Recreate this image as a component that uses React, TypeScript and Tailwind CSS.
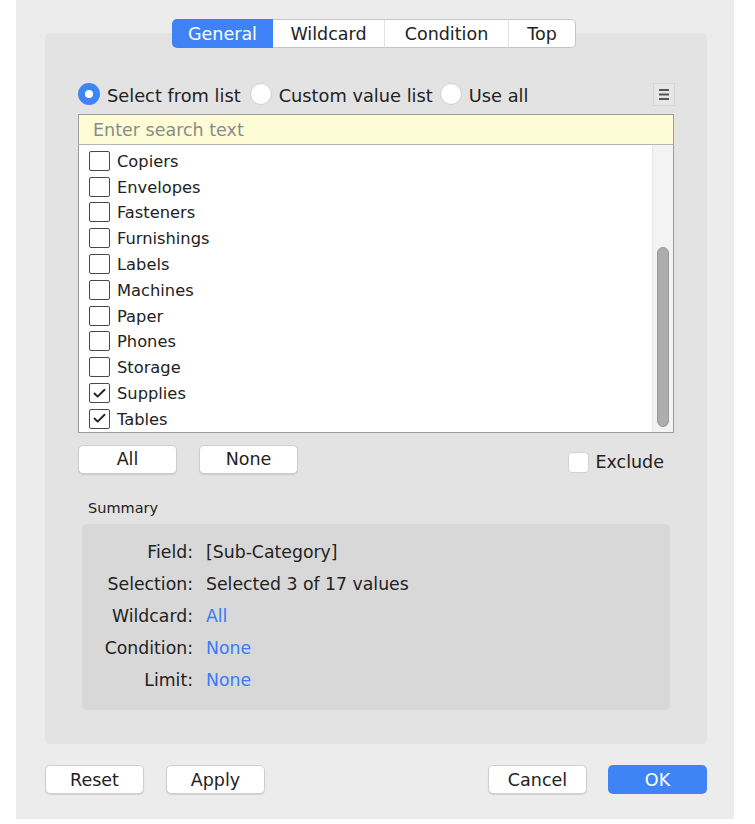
import { Check } from 'lucide-react'

const items = [
  { name: 'Copiers', checked: false },
  { name: 'Envelopes', checked: false },
  { name: 'Fasteners', checked: false },
  { name: 'Furnishings', checked: false },
  { name: 'Labels', checked: false },
  { name: 'Machines', checked: false },
  { name: 'Paper', checked: false },
  { name: 'Phones', checked: false },
  { name: 'Storage', checked: false },
  { name: 'Supplies', checked: true },
  { name: 'Tables', checked: true },
]

const summary = [
  { label: 'Field:', value: '[Sub-Category]', link: false },
  { label: 'Selection:', value: 'Selected 3 of 17 values', link: false },
  { label: 'Wildcard:', value: 'All', link: true },
  { label: 'Condition:', value: 'None', link: true },
  { label: 'Limit:', value: 'None', link: true },
]

const Radio = ({ on, label }: { on?: boolean; label: string }) => (
  <div className="flex items-center">
    {on ? (
      <div className="w-[22px] h-[22px] rounded-full bg-[#3f85f6] flex items-center justify-center">
        <div className="w-[8px] h-[8px] rounded-full bg-white" />
      </div>
    ) : (
      <div className="w-[22px] h-[22px] rounded-full bg-white border border-[#d0d0d0]" />
    )}
    <span className="ml-[7px] translate-y-[2px]">{label}</span>
  </div>
)

const Button = ({ children, className = '' }: { children: React.ReactNode; className?: string }) => (
  <button className={`h-[29px] w-[99px] rounded-[5px] bg-white border border-[#cfcfcf] shadow-[0_1px_1px_rgba(0,0,0,0.12)] text-[17.5px] text-[#222] leading-none flex items-center justify-center ${className}`}>
    <span className="translate-y-[1px]">{children}</span>
  </button>
)

export default function App() {
  return (
    <div className="w-[755px] h-[824px] bg-white font-['DejaVu_Sans',sans-serif] text-[#222]">
      <div className="ml-[16px] w-[718px] h-[819px] bg-[#ececec] pl-[29px] pr-[27px] pt-[33px]">
        {/* Panel */}
        <div className="w-full h-[711px] bg-[#e3e3e3] rounded-[5px] px-[33px] flex flex-col">
          {/* Tabs */}
          <div className="-mt-[14px] h-[29px] flex justify-center pr-[4px] text-[17.5px] leading-none">
            <div className="w-[101px] h-full bg-[#3f82f6] text-white rounded-l-[5px] flex items-center justify-center pt-[3px]">General</div>
            <div className="w-[112px] h-full bg-white border-y border-[#c4c4c4] border-r border-r-[#e0e0e0] flex items-center justify-center pt-[3px]">Wildcard</div>
            <div className="w-[124px] h-full bg-white border-y border-[#c4c4c4] border-r border-r-[#e0e0e0] flex items-center justify-center pt-[3px]">Condition</div>
            <div className="w-[67px] h-full bg-white border border-l-0 border-[#c4c4c4] rounded-r-[5px] flex items-center justify-center pt-[3px]">Top</div>
          </div>

          {/* Radio row */}
          <div className="mt-[34px] h-[24px] flex items-center text-[17.8px] leading-none">
            <Radio on label="Select from list" />
            <div className="ml-[9px]"><Radio label="Custom value list" /></div>
            <div className="ml-[7px]"><Radio label="Use all" /></div>
            <div className="ml-auto -mr-[1px] w-[22px] h-[23px] border border-[#d6d6d6] bg-[#e6e6e6] flex items-center justify-center">
              <svg width="12" height="13" viewBox="0 0 12 13">
                <rect x="1" y="1" width="10" height="2" fill="#555" />
                <rect x="1" y="5.5" width="10" height="2" fill="#555" />
                <rect x="1" y="10" width="10" height="2" fill="#555" />
              </svg>
            </div>
          </div>

          {/* Search */}
          <div className="mt-[8px] h-[30px] bg-[#fdfcd7] border border-b-0 border-[#9d9d9d] flex items-center pl-[14px] pt-[3px] text-[17.5px] text-[#8a8a8a] leading-none">
            Enter search text
          </div>

          {/* List */}
          <div className="h-[289px] bg-white border border-[#9d9d9d] border-t-[#b5b5b5] border-t-dotted flex">
            <div className="flex-1 pt-[3px] pl-[10px] text-[16.3px] leading-none">
              {items.map((it) => (
                <div key={it.name} className="h-[25.8px] flex items-center">
                  <div className="w-[21px] h-[20px] border border-[#4a4a4a] rounded-[2px] bg-white flex items-center justify-center">
                    {it.checked && <Check size={15} strokeWidth={3} className="text-[#222]" />}
                  </div>
                  <span className="ml-[7px] translate-y-[1px]">{it.name}</span>
                </div>
              ))}
            </div>
            <div className="w-[21px] bg-[#f3f3f3] border-l border-[#e6e6e6] flex flex-col items-center">
              <div className="mt-[102px] w-[12px] h-[180px] rounded-full bg-[#adadad] border border-[#9a9a9a]" />
            </div>
          </div>

          {/* All / None / Exclude */}
          <div className="mt-[12px] h-[28px] flex items-center">
            <Button className="w-[98px]">All</Button>
            <Button className="ml-[22px]">None</Button>
            <div className="ml-auto mr-[10px] mt-[6px] flex items-center text-[17.5px] leading-none">
              <div className="w-[21px] h-[21px] rounded-[4px] bg-white border border-[#d2d2d2]" />
              <span className="ml-[6px] translate-y-[1px]">Exclude</span>
            </div>
          </div>

          {/* Summary */}
          <div className="mt-[25px] h-[20px] pl-[10px] flex items-center text-[14.5px] leading-none">Summary</div>
          <div className="mt-[6px] mx-[4px] h-[186px] rounded-[5px] bg-[#d8d8d8] pt-[13px] text-[17.3px] leading-none">
            {summary.map((r) => (
              <div key={r.label} className="h-[32px] flex items-center">
                <div className="w-[111px] text-right">{r.label}</div>
                <div className={`ml-[13px] ${r.link ? 'text-[#3a7bf5]' : ''}`}>{r.value}</div>
              </div>
            ))}
          </div>
        </div>

        {/* Bottom buttons */}
        <div className="mt-[21px] flex items-center">
          <Button className="w-[98px]">Reset</Button>
          <Button className="ml-[22px]">Apply</Button>
          <Button className="ml-auto">Cancel</Button>
          <button className="ml-[21px] h-[29px] w-[99px] rounded-[5px] bg-[#3f84f6] text-white text-[17.5px] leading-none flex items-center justify-center">
            <span className="translate-y-[1px]">OK</span>
          </button>
        </div>
      </div>
    </div>
  )
}
